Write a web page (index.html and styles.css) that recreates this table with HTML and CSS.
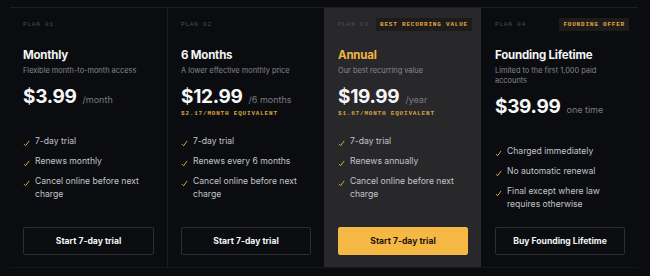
FILE: index.html
```html
<!DOCTYPE html>
<html lang="en">
<head>
    <meta charset="UTF-8">
    <meta name="viewport" content="width=device-width, initial-scale=1.0">
    <title>Plans</title>

    <link rel="stylesheet" href="styles.css">
</head>
<body>

    <div class="plans">

        <div class="plan">
            <div class="plan-top">
                <span class="plan-num">Plan 01</span>
            </div>
            <h2 class="plan-name">Monthly</h2>
            <p class="plan-desc">Flexible month-to-month access</p>
            <div class="price-block">
                <div class="price"><span class="amount">$3.99</span><span class="period">/month</span></div>
                <div class="equiv"></div>
            </div>
            <ul class="features">
                <li><svg class="check" viewBox="0 0 8 8"><path d="M1 4.6 L3 6.6 L7 1"/></svg>7-day trial</li>
                <li><svg class="check" viewBox="0 0 8 8"><path d="M1 4.6 L3 6.6 L7 1"/></svg>Renews monthly</li>
                <li><svg class="check" viewBox="0 0 8 8"><path d="M1 4.6 L3 6.6 L7 1"/></svg>Cancel online before next charge</li>
            </ul>
            <button class="btn">Start 7-day trial</button>
        </div>

        <div class="plan">
            <div class="plan-top">
                <span class="plan-num">Plan 02</span>
            </div>
            <h2 class="plan-name">6 Months</h2>
            <p class="plan-desc">A lower effective monthly price</p>
            <div class="price-block">
                <div class="price"><span class="amount">$12.99</span><span class="period">/6 months</span></div>
                <div class="equiv">$2.17/month equivalent</div>
            </div>
            <ul class="features">
                <li><svg class="check" viewBox="0 0 8 8"><path d="M1 4.6 L3 6.6 L7 1"/></svg>7-day trial</li>
                <li><svg class="check" viewBox="0 0 8 8"><path d="M1 4.6 L3 6.6 L7 1"/></svg>Renews every 6 months</li>
                <li><svg class="check" viewBox="0 0 8 8"><path d="M1 4.6 L3 6.6 L7 1"/></svg>Cancel online before next charge</li>
            </ul>
            <button class="btn">Start 7-day trial</button>
        </div>

        <div class="plan plan-featured">
            <div class="plan-top">
                <span class="plan-num">Plan 03</span>
                <span class="badge">Best recurring value</span>
            </div>
            <h2 class="plan-name">Annual</h2>
            <p class="plan-desc">Our best recurring value</p>
            <div class="price-block">
                <div class="price"><span class="amount">$19.99</span><span class="period">/year</span></div>
                <div class="equiv">$1.67/month equivalent</div>
            </div>
            <ul class="features">
                <li><svg class="check" viewBox="0 0 8 8"><path d="M1 4.6 L3 6.6 L7 1"/></svg>7-day trial</li>
                <li><svg class="check" viewBox="0 0 8 8"><path d="M1 4.6 L3 6.6 L7 1"/></svg>Renews annually</li>
                <li><svg class="check" viewBox="0 0 8 8"><path d="M1 4.6 L3 6.6 L7 1"/></svg>Cancel online before next charge</li>
            </ul>
            <button class="btn btn-primary">Start 7-day trial</button>
        </div>

        <div class="plan">
            <div class="plan-top">
                <span class="plan-num">Plan 04</span>
                <span class="badge">Founding offer</span>
            </div>
            <h2 class="plan-name">Founding Lifetime</h2>
            <p class="plan-desc">Limited to the first 1,000 paid accounts</p>
            <div class="price-block">
                <div class="price"><span class="amount">$39.99</span><span class="period">one time</span></div>
                <div class="equiv"></div>
            </div>
            <ul class="features">
                <li><svg class="check" viewBox="0 0 8 8"><path d="M1 4.6 L3 6.6 L7 1"/></svg>Charged immediately</li>
                <li><svg class="check" viewBox="0 0 8 8"><path d="M1 4.6 L3 6.6 L7 1"/></svg>No automatic renewal</li>
                <li><svg class="check" viewBox="0 0 8 8"><path d="M1 4.6 L3 6.6 L7 1"/></svg>Final except where law requires otherwise</li>
            </ul>
            <button class="btn">Buy Founding Lifetime</button>
        </div>

    </div>

</body>
</html>
```

FILE: styles.css
```css
html, body {
    margin: 0;
    padding: 0;
    background-color: #0b0c10;
    font-family: Inter, "Noto Sans", sans-serif;
}

.plans {
    display: grid;
    grid-template-columns: repeat(4, 1fr);
    width: 628px;
    margin: 7px 0 0 10px;
    border-top: 1px solid #1d1e23;
    border-bottom: 1px solid #15161a;
    background-color: #0b0c10;
}

.plan {
    display: flex;
    flex-direction: column;
    padding: 10px 13px 12px 13px;
    border-left: 1px solid #1c1d22;
}

.plan:first-child {
    border-left: none;
}

.plan-featured {
    background-color: #28282b;
    border-left-color: #28282b;
}

.plan-featured + .plan {
    border-left-color: transparent;
}

.plan-top {
    display: flex;
    justify-content: space-between;
    align-items: center;
    height: 13px;
}

.plan-num, .badge, .equiv {
    font-family: "Liberation Mono", "DejaVu Sans Mono", monospace;
    font-size: 6px;
    letter-spacing: 0.8px;
    text-transform: uppercase;
}

.plan-num {
    color: #4d4e54;
}

.badge {
    color: #e0a943;
    font-weight: bold;
    background-color: #1d1c1b;
    padding: 3px 4px;
    margin-right: -4px;
    line-height: 7px;
}

.plan-name {
    margin: 16px 0 0 0;
    font-size: 11.5px;
    line-height: 16px;
    font-weight: 700;
    color: #f4f4f5;
    letter-spacing: -0.2px;
}

.plan-featured .plan-name {
    color: #f2b543;
}

.plan-desc {
    margin: 3px 0 0 0;
    font-size: 7.4px;
    line-height: 10px;
    color: #85868c;
}

.price-block {
    margin-top: 9px;
}

.price {
    display: flex;
    align-items: baseline;
    gap: 6px;
    height: 24px;
    line-height: 24px;
}

.amount {
    font-size: 19px;
    font-weight: 700;
    color: #f7f7f8;
    letter-spacing: -0.3px;
}

.period {
    font-size: 9px;
    line-height: 1;
    color: #7b7c82;
}

.equiv {
    height: 10px;
    line-height: 10px;
    color: #d9a443;
    font-weight: bold;
}

.features {
    list-style: none;
    margin: 16px 0 16px 0;
    padding: 0;
    display: flex;
    flex-direction: column;
    gap: 7px;
}

.features li {
    display: flex;
    align-items: flex-start;
    font-size: 8.6px;
    line-height: 13px;
    color: #c3c4c8;
}

.check {
    flex: none;
    width: 7px;
    height: 7px;
    margin: 5px 5px 0 0;
    fill: none;
    stroke: #e2a83e;
    stroke-width: 1.1;
}

.btn {
    margin-top: auto;
    height: 28px;
    border: 1px solid #2d2e33;
    border-radius: 2px;
    background-color: transparent;
    color: #f4f4f5;
    font-family: Inter, "Noto Sans", sans-serif;
    font-size: 8.6px;
    font-weight: 700;
    cursor: pointer;
}

.btn-primary {
    background-color: #f6b844;
    border-color: #f6b844;
    color: #1c150a;
}
```
